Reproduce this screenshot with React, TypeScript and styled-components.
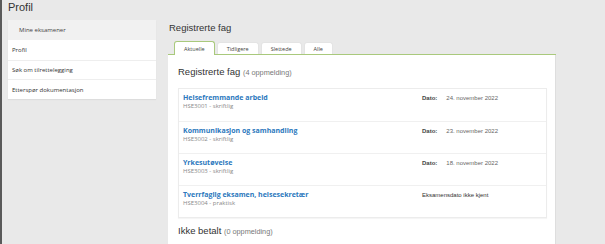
import styled, { createGlobalStyle } from "styled-components";

const GlobalStyle = createGlobalStyle`
  html, body {
    margin: 0;
    padding: 0;
    background: #e9e9e9;
  }
  body {
    font-family: "Open Sans", "Liberation Sans", sans-serif;
    color: #333;
  }
  * {
    box-sizing: border-box;
  }
`;

const Page = styled.div`
  height: 244px;
  overflow: hidden;
  border-left: 2px solid #5a5a5a;
  padding-left: 6px;
`;

const PageTitle = styled.h1`
  margin: 0;
  height: 20px;
  padding-top: 1px;
  font-family: "Liberation Sans", Arial, sans-serif;
  font-size: 11px;
  font-weight: 400;
  line-height: 12px;
  color: #333;
`;

const Body = styled.div`
  display: flex;
  gap: 12px;
`;

const Sidebar = styled.nav`
  width: 148px;
  display: flex;
  flex-direction: column;
  background: #fff;
  box-shadow: 0 1px 1px rgba(0, 0, 0, 0.05);
  align-self: flex-start;
`;

const SidebarHeader = styled.div`
  height: 20px;
  display: flex;
  align-items: center;
  padding-left: 11px;
  background: #f1f1f1;
  font-size: 6px;
  color: #444;
`;

const SidebarItem = styled.a`
  height: 19.7px;
  display: flex;
  align-items: center;
  padding-left: 4px;
  font-size: 6px;
  color: #333;
  border-top: 1px solid #eeeeee;
  &:first-of-type {
    border-top: none;
  }
`;

const Content = styled.main`
  width: 388px;
  display: flex;
  flex-direction: column;
`;

const SectionTitle = styled.h2`
  margin: 0;
  height: 22px;
  padding: 2px 0 0 1px;
  font-family: "Liberation Sans", Arial, sans-serif;
  font-size: 9.5px;
  font-weight: 400;
  line-height: 12px;
  color: #333;
`;

const Tabs = styled.div`
  display: flex;
  align-items: flex-end;
  gap: 2px;
  height: 13px;
  padding-left: 6px;
  border-bottom: 1.5px solid #a9c97c;
`;

const Tab = styled.button<{ $active?: boolean }>`
  height: ${({ $active }) => ($active ? "14.5px" : "12px")};
  margin-bottom: ${({ $active }) => ($active ? "-1.5px" : "0")};
  padding: 0 9px;
  border: 1px solid ${({ $active }) => ($active ? "#a9c97c" : "#e4e4e4")};
  border-bottom: none;
  border-radius: 3px 3px 0 0;
  background: #fff;
  font-family: "Open Sans", sans-serif;
  font-size: 5.5px;
  color: #444;
  display: flex;
  align-items: center;
  justify-content: center;
  cursor: pointer;
`;

const Panel = styled.section`
  flex: 1;
  background: #fff;
  border-right: 1px solid #dedede;
  padding: 11px 8px 0 10px;
  min-height: 200px;
`;

const Heading = styled.h3`
  margin: 0;
  font-family: "Liberation Sans", Arial, sans-serif;
  font-size: 9.5px;
  font-weight: 400;
  line-height: 12px;
  color: #333;
`;

const Count = styled.span`
  font-size: 7.3px;
  color: #777;
`;

const List = styled.ul`
  list-style: none;
  margin: 9px 0 0;
  padding: 0;
  border: 1px solid #ececec;
  box-shadow: 0 1px 1px rgba(0, 0, 0, 0.04);
`;

const Row = styled.li`
  height: 32px;
  display: grid;
  grid-template-columns: 1fr 124px;
  padding: 4px 0 0 4px;
  border-top: 1px solid #f0f0f0;
  &:first-child {
    border-top: none;
  }
`;

const Course = styled.div`
  display: flex;
  flex-direction: column;
`;

const CourseName = styled.a`
  font-size: 7px;
  font-weight: 700;
  line-height: 9px;
  color: #2b78bd;
`;

const CourseCode = styled.span`
  font-size: 6px;
  line-height: 9px;
  color: #888;
`;

const DateCell = styled.div`
  display: flex;
  gap: 9px;
  padding-top: 1px;
  font-family: "Liberation Sans", Arial, sans-serif;
  font-size: 6px;
  line-height: 9px;
  color: #666;
`;

const DateLabel = styled.b`
  color: #444;
`;

const NoDate = styled.span`
  color: #333;
`;

const SecondHeading = styled(Heading)`
  margin-top: 7px;
`;

const exams = [
  { name: "Helsefremmande arbeid", code: "HSE3001 - skriftlig", date: "24. november 2022" },
  { name: "Kommunikasjon og samhandling", code: "HSE3002 - skriftlig", date: "23. november 2022" },
  { name: "Yrkesutøvelse", code: "HSE3003 - skriftlig", date: "18. november 2022" },
  { name: "Tverrfaglig eksamen, helsesekretær", code: "HSE3004 - praktisk", date: null },
];

const tabs = ["Aktuelle", "Tidligere", "Slettede", "Alle"];

export default function App() {
  return (
    <>
      <GlobalStyle />
      <Page>
        <PageTitle>Profil</PageTitle>
        <Body>
          <Sidebar>
            <SidebarHeader>Mine eksamener</SidebarHeader>
            <SidebarItem>Profil</SidebarItem>
            <SidebarItem>Søk om tilrettelegging</SidebarItem>
            <SidebarItem>Etterspør dokumentasjon</SidebarItem>
          </Sidebar>
          <Content>
            <SectionTitle>Registrerte fag</SectionTitle>
            <Tabs>
              {tabs.map((label, i) => (
                <Tab key={label} $active={i === 0}>
                  {label}
                </Tab>
              ))}
            </Tabs>
            <Panel>
              <Heading>
                Registrerte fag <Count>(4 oppmelding)</Count>
              </Heading>
              <List>
                {exams.map((e) => (
                  <Row key={e.code}>
                    <Course>
                      <CourseName>{e.name}</CourseName>
                      <CourseCode>{e.code}</CourseCode>
                    </Course>
                    <DateCell>
                      {e.date ? (
                        <>
                          <DateLabel>Dato:</DateLabel>
                          <span>{e.date}</span>
                        </>
                      ) : (
                        <NoDate>Eksamensdato ikke kjent</NoDate>
                      )}
                    </DateCell>
                  </Row>
                ))}
              </List>
              <SecondHeading>
                Ikke betalt <Count>(0 oppmelding)</Count>
              </SecondHeading>
            </Panel>
          </Content>
        </Body>
      </Page>
    </>
  );
}
